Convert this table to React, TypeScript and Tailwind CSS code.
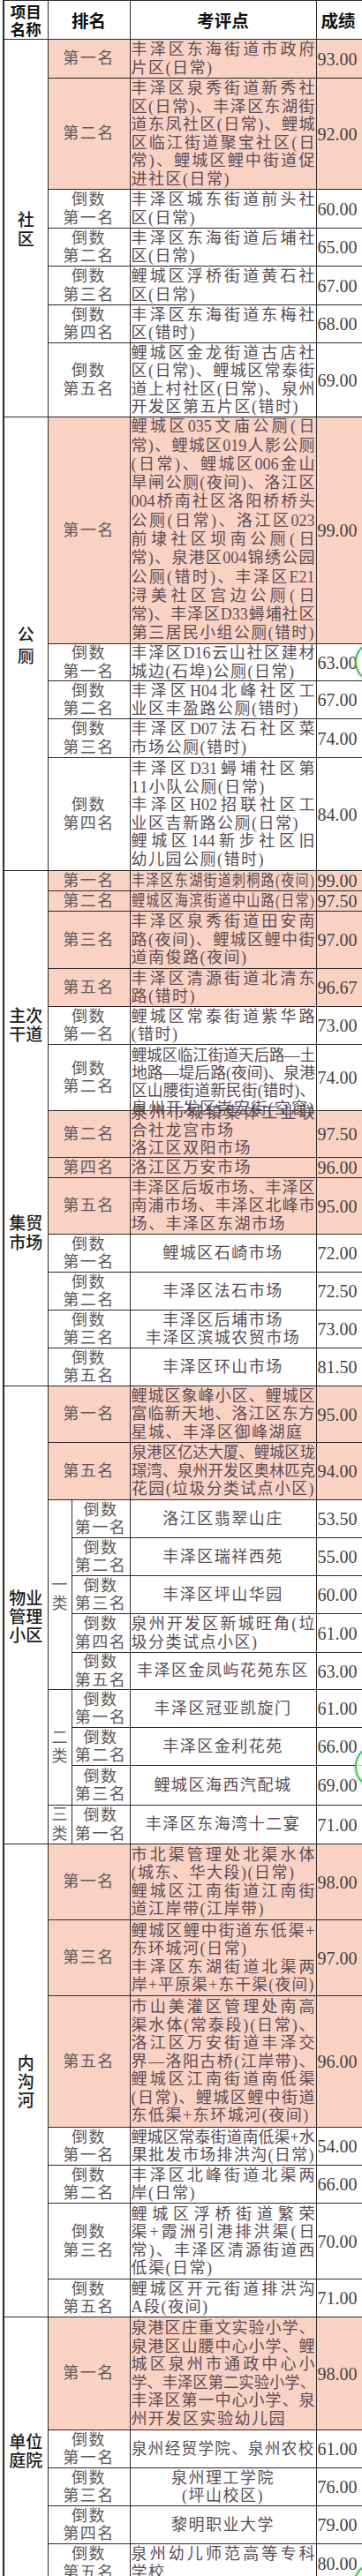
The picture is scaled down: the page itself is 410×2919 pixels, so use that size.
import { useLayoutEffect, useRef, useState } from "react";
import clsx from "clsx";

type Row = {
  rank: string[];
  lines: string[];
  score: string;
  h: string;
  pink?: boolean;
  center?: boolean;
  lh?: string;
  box?: string;
  cls?: { label: string[]; span: number };
  sub?: boolean;
};

type Section = { label?: string[]; lh?: string; custom?: boolean; rows: Row[] };

const serif = "font-['Liberation_Serif','Noto_Sans_CJK_SC',serif]";
const hei = "font-['Noto_Sans_CJK_SC',sans-serif]";
const cell = "border border-[#2a2a2a] p-0";
const pinkBg = "bg-[#fad2c3]";

const shequ: Row[] = [
  { rank: ["第一名"], lines: ["丰泽区东海街道市政府", "片区(日常)"], score: "93.00", h: "h-[44px]", pink: true },
  {
    rank: ["第二名"],
    lines: ["丰泽区泉秀街道新秀社", "区(日常)、丰泽区东湖街", "道东凤社区(日常)、鲤城", "区临江街道聚宝社区(日", "常)、鲤城区鲤中街道促", "进社区(日常)"],
    score: "92.00",
    h: "h-[126px]",
    pink: true,
  },
  { rank: ["倒数", "第一名"], lines: ["丰泽区城东街道前头社", "区(日常)"], score: "60.00", h: "h-[44px]" },
  { rank: ["倒数", "第二名"], lines: ["丰泽区东海街道后埔社", "区(日常)"], score: "65.00", h: "h-[43px]" },
  { rank: ["倒数", "第三名"], lines: ["鲤城区浮桥街道黄石社", "区(日常)"], score: "67.00", h: "h-[44px]" },
  { rank: ["倒数", "第四名"], lines: ["丰泽区东海街道东梅社", "区(错时)"], score: "68.00", h: "h-[43px]" },
  {
    rank: ["倒数", "第五名"],
    lines: ["鲤城区金龙街道古店社", "区(日常)、鲤城区常泰街", "道上村社区(日常)、泉州", "开发区第五片区(错时)"],
    score: "69.00",
    h: "h-[84px]",
  },
];

const gongce: Row[] = [
  {
    rank: ["第一名"],
    lines: [
      "鲤城区035文庙公厕(日",
      "常)、鲤城区019人影公厕",
      "(日常)、鲤城区006金山",
      "旱闸公厕(夜间)、洛江区",
      "004桥南社区洛阳桥桥头",
      "公厕(日常)、洛江区023",
      "前埭社区坝南公厕(日",
      "常)、泉港区004锦绣公园",
      "公厕(错时)、丰泽区E21",
      "浔美社区宫边公厕(日",
      "常)、丰泽区D33蟳埔社区",
      "第三居民小组公厕(错时)",
    ],
    score: "99.00",
    h: "h-[257px]",
    pink: true,
    lh: "leading-[21.3px]",
  },
  { rank: ["倒数", "第一名"], lines: ["丰泽区D16云山社区建材", "城边(石埠)公厕(日常)"], score: "63.00", h: "h-[42px]" },
  { rank: ["倒数", "第二名"], lines: ["丰泽区H04北峰社区工", "业区丰盈路公厕(错时)"], score: "67.00", h: "h-[43px]" },
  { rank: ["倒数", "第三名"], lines: ["丰泽区D07法石社区菜", "市场公厕(错时)"], score: "74.00", h: "h-[44px]" },
  {
    rank: ["倒数", "第四名"],
    lines: ["丰泽区D31蟳埔社区第", "<11小队公厕(日常)", "丰泽区H02招联社区工", "<业区吉新路公厕(日常)", "鲤城区144新步社区旧", "幼儿园公厕(错时)"],
    score: "84.00",
    h: "h-[128px]",
  },
];

const zhuci: Row[] = [
  { rank: ["第一名"], lines: ["丰泽区东湖街道刺桐路(夜间)"], score: "99.00", h: "h-[22px]", pink: true, lh: "leading-[20px]" },
  { rank: ["第二名"], lines: ["鲤城区海滨街道中山路(日常)"], score: "97.50", h: "h-[21px]", pink: true, lh: "leading-[20px]" },
  {
    rank: ["第三名"],
    lines: ["丰泽区泉秀街道田安南", "路(夜间)、鲤城区鲤中街", "道南俊路(夜间)"],
    score: "97.00",
    h: "h-[65px]",
    pink: true,
  },
  { rank: ["第五名"], lines: ["丰泽区清源街道北清东", "路(错时)"], score: "96.67", h: "h-[43px]", pink: true },
  { rank: ["倒数", "第一名"], lines: ["鲤城区常泰街道紫华路", "(错时)"], score: "73.00", h: "h-[43px]" },
  {
    rank: ["倒数", "第二名"],
    lines: ["鲤城区临江街道天后路—土", "地路—堤后路(夜间)、泉港", "区山腰街道新民街(错时)、", "泉州开发区崇宏街(空窗)"],
    score: "74.00",
    h: "h-[75px]",
    box: "h-[74px] pt-[2px]",
    lh: "leading-[20px]",
  },
];

const jimao: Row[] = [
  {
    rank: ["第二名"],
    lines: ["泉州市城镇集体工业联", "<合社龙宫市场", "洛江区双阳市场"],
    score: "97.50",
    h: "h-[53px]",
    pink: true,
    box: "flex h-[52px] flex-col justify-end",
    lh: "leading-[20px]",
  },
  { rank: ["第四名"], lines: ["洛江区万安市场"], score: "96.00", h: "h-[22px]", pink: true, lh: "leading-[20px]" },
  {
    rank: ["第五名"],
    lines: ["丰泽区后坂市场、丰泽区", "南浦市场、丰泽区北峰市", "场、丰泽区东湖市场"],
    score: "95.00",
    h: "h-[64px]",
    pink: true,
  },
  { rank: ["倒数", "第一名"], lines: ["鲤城区石崎市场"], center: true, score: "72.00", h: "h-[43px]" },
  { rank: ["倒数", "第二名"], lines: ["丰泽区法石市场"], center: true, score: "72.50", h: "h-[43px]" },
  { rank: ["倒数", "第三名"], lines: ["丰泽区后埔市场", "丰泽区滨城农贸市场"], center: true, score: "73.00", h: "h-[43px]" },
  { rank: ["倒数", "第五名"], lines: ["丰泽区环山市场"], center: true, score: "81.50", h: "h-[43px]" },
];

const wuye: Row[] = [
  {
    rank: ["第一名"],
    lines: ["鲤城区象峰小区、鲤城区", "富临新天地、洛江区东方", "星城、丰泽区御峰湖庭"],
    score: "95.00",
    h: "h-[64px]",
    pink: true,
  },
  {
    rank: ["第五名"],
    lines: ["泉港区亿达大厦、鲤城区珑", "璟湾、泉州开发区奥林匹克", "花园(垃圾分类试点小区)"],
    score: "94.00",
    h: "h-[65px]",
    pink: true,
  },
  { cls: { label: ["一", "类"], span: 5 }, sub: true, rank: ["倒数", "第一名"], lines: ["洛江区翡翠山庄"], center: true, score: "53.50", h: "h-[43px]" },
  { sub: true, rank: ["倒数", "第二名"], lines: ["丰泽区瑞祥西苑"], center: true, score: "55.00", h: "h-[43px]" },
  { sub: true, rank: ["倒数", "第三名"], lines: ["丰泽区坪山华园"], center: true, score: "60.00", h: "h-[43px]" },
  { sub: true, rank: ["倒数", "第四名"], lines: ["泉州开发区新城旺角(垃", "圾分类试点小区)"], score: "61.00", h: "h-[44px]" },
  { sub: true, rank: ["倒数", "第五名"], lines: ["丰泽区金凤屿花苑东区"], center: true, score: "63.00", h: "h-[42px]" },
  { cls: { label: ["二", "类"], span: 3 }, sub: true, rank: ["倒数", "第一名"], lines: ["丰泽区冠亚凯旋门"], center: true, score: "61.00", h: "h-[43px]" },
  { sub: true, rank: ["倒数", "第二名"], lines: ["丰泽区金利花苑"], center: true, score: "66.00", h: "h-[43px]" },
  { sub: true, rank: ["倒数", "第三名"], lines: ["鲤城区海西汽配城"], center: true, score: "69.00", h: "h-[45px]" },
  { cls: { label: ["三", "类"], span: 1 }, sub: true, rank: ["倒数", "第一名"], lines: ["丰泽区东海湾十二宴"], center: true, score: "71.00", h: "h-[42px]" },
];

const neigou: Row[] = [
  {
    rank: ["第一名"],
    lines: ["市北渠管理处北渠水体", "<(城东、华大段)(日常)", "鲤城区江南街道江南街", "道江岸带(江岸带)"],
    score: "98.00",
    h: "h-[86px]",
    pink: true,
  },
  {
    rank: ["第三名"],
    lines: ["鲤城区鲤中街道东低渠+", "<东环城河(日常)", "丰泽区东湖街道北渠两", "岸+平原渠+东干渠(夜间)"],
    score: "97.00",
    h: "h-[86px]",
    pink: true,
  },
  {
    rank: ["第五名"],
    lines: [
      "市山美灌区管理处南高",
      "渠水体(常泰段)(日常)、",
      "洛江区万安街道丰泽交",
      "界—洛阳古桥(江岸带)、",
      "鲤城区江南街道南低渠",
      "(日常)、鲤城区鲤中街道",
      "东低渠+东环城河(夜间)",
    ],
    score: "96.00",
    h: "h-[149px]",
    pink: true,
  },
  { rank: ["倒数", "第一名"], lines: ["鲤城区常泰街道南低渠+水", "果批发市场排洪沟(日常)"], score: "54.00", h: "h-[43px]" },
  { rank: ["倒数", "第二名"], lines: ["丰泽区北峰街道北渠两", "岸(日常)"], score: "66.00", h: "h-[43px]" },
  {
    rank: ["倒数", "第三名"],
    lines: ["鲤城区浮桥街道繁荣", "渠+霞洲引港排洪渠(日", "常)、丰泽区清源街道西", "低渠(日常)"],
    score: "70.00",
    h: "h-[86px]",
  },
  { rank: ["倒数", "第五名"], lines: ["鲤城区开元街道排洪沟", "A段(夜间)"], score: "71.00", h: "h-[43px]" },
];

const danwei: Row[] = [
  {
    rank: ["第一名"],
    lines: ["泉港区庄重文实验小学、", "泉港区山腰中心小学、鲤", "城区泉州市通政中心小", "学、丰泽区第二实验小学、", "丰泽区第一中心小学、泉", "州开发区实验幼儿园"],
    score: "98.00",
    h: "h-[128px]",
    pink: true,
  },
  { rank: ["倒数", "第一名"], lines: ["泉州经贸学院、泉州农校"], score: "61.00", h: "h-[43px]" },
  { rank: ["倒数", "第三名"], lines: ["泉州理工学院", "(坪山校区)"], center: true, score: "76.00", h: "h-[43px]" },
  { rank: ["倒数", "第四名"], lines: ["黎明职业大学"], center: true, score: "79.00", h: "h-[43px]" },
  { rank: ["倒数", "第五名"], lines: ["泉州幼儿师范高等专科", "学校"], score: "80.00", h: "h-[44px]" },
];

const sections: Section[] = [
  { label: ["社", "区"], lh: "leading-[22px]", rows: shequ },
  { label: ["公", "厕"], lh: "leading-[25px]", rows: gongce },
  { custom: true, rows: [...zhuci, ...jimao] },
  { label: ["物业", "管理", "小区"], rows: wuye },
  { label: ["内", "沟", "河"], rows: neigou },
  { label: ["单位", "庭院"], rows: danwei },
];

function tokens(text: string) {
  return text.match(/[A-Za-z0-9]+|./gu) ?? [];
}

// one printed line; justified lines spread, lines that are too long get squeezed
function Line({ text, mode }: { text: string; mode: "j" | "l" | "c" }) {
  const box = useRef<HTMLDivElement>(null);
  const inner = useRef<HTMLSpanElement>(null);
  const [scale, setScale] = useState<number | null>(null);

  useLayoutEffect(() => {
    if (!box.current || !inner.current) return;
    const avail = box.current.clientWidth;
    const natural = inner.current.offsetWidth;
    setScale(natural > avail ? avail / natural : 1);
  }, []);

  if (mode === "j" && scale === 1) {
    return (
      <div className="flex justify-between whitespace-nowrap">
        {tokens(text).map((t, i) => (
          <span key={i}>{t}</span>
        ))}
      </div>
    );
  }

  return (
    <div ref={box} className={clsx("whitespace-nowrap", mode === "c" ? "text-center" : "text-left")}>
      <span
        ref={inner}
        className={clsx("inline-block origin-left", mode !== "j" && "tracking-[1.5px]")}
        style={scale !== null && scale < 1 ? { transform: `scaleX(${scale})` } : undefined}
      >
        {text}
      </span>
    </div>
  );
}

function lineMode(row: Row, idx: number): "j" | "l" | "c" {
  if (row.center) return "c";
  if (row.lines[idx].startsWith("<")) return "l";
  return idx === row.lines.length - 1 ? "l" : "j";
}

function CategoryLabel({ lines, lh }: { lines: string[]; lh?: string }) {
  return (
    <div className={clsx(hei, "text-[19px] font-medium text-[#1c1c1c]", lh ?? "leading-[21px]")}>
      {lines.map((l) => (
        <div key={l}>{l}</div>
      ))}
    </div>
  );
}

export default function App() {
  return (
    <div className="relative w-[410px] overflow-hidden bg-white">
      <table className={clsx(serif, "ml-[3px] w-[410px] table-fixed border-collapse")}>
        <colgroup>
          <col className="w-[50px]" />
          <col className="w-[27px]" />
          <col className="w-[66px]" />
          <col className="w-[211px]" />
          <col className="w-[56px]" />
        </colgroup>
        <tbody>
          <tr className="h-[44px]">
            <td className={clsx(cell, "border-l-2 text-center")}>
              <div className={clsx(hei, "text-[17.5px] font-bold leading-[20px] text-[#111]")}>
                <div>项目</div>
                <div>名称</div>
              </div>
            </td>
            <td colSpan={2} className={clsx(cell, hei, "text-center text-[19.5px] font-bold text-[#111]")}>
              排名
            </td>
            <td className={clsx(cell, hei, "text-center text-[19.5px] font-bold text-[#111]")}>考评点</td>
            <td className={clsx(cell, hei, "pl-[5px] text-left text-[19.5px] font-bold text-[#111]")}>成绩</td>
          </tr>

          {sections.map((sec, si) =>
            sec.rows.map((r, ri) => (
              <tr key={`${si}-${ri}`} className={r.h}>
                {ri === 0 && (
                  <td
                    rowSpan={sec.rows.length}
                    className={clsx(cell, "border-l-2 text-center", sec.custom ? "align-top" : "align-middle")}
                  >
                    {sec.custom ? (
                      <>
                        <div className="pt-[152px]">
                          <CategoryLabel lines={["主次", "干道"]} />
                        </div>
                        <div className="mt-[193px]">
                          <CategoryLabel lines={["集贸", "市场"]} lh="leading-[22px]" />
                        </div>
                      </>
                    ) : (
                      <CategoryLabel lines={sec.label ?? []} lh={sec.lh} />
                    )}
                  </td>
                )}
                {r.cls && (
                  <td rowSpan={r.cls.span} className={clsx(cell, "text-center text-[18px] leading-[21.5px] text-[#666]")}>
                    {r.cls.label.map((c) => (
                      <div key={c}>{c}</div>
                    ))}
                  </td>
                )}
                <td
                  colSpan={r.sub ? 1 : 2}
                  className={clsx(
                    cell,
                    "text-center text-[18px] tracking-[1.5px] text-[#5f585c]",
                    r.lh === "leading-[20px]" ? "leading-[20px]" : "leading-[20.5px]",
                    r.pink && pinkBg
                  )}
                >
                  {r.rank.map((x) => (
                    <div key={x}>{x}</div>
                  ))}
                </td>
                <td className={clsx(cell, "px-[1px]", r.pink && pinkBg)}>
                  <div className={clsx(r.box, r.lh ?? "leading-[20.5px]", "text-[18px] text-[#5b4d56]")}>
                    {r.lines.map((l, li) => (
                      <Line key={li} text={l.replace(/^</, "")} mode={lineMode(r, li)} />
                    ))}
                  </div>
                </td>
                <td
                  className={clsx(
                    cell,
                    "pl-[1px] text-left font-['Liberation_Serif',serif] text-[20px] leading-[22px] text-[#444]",
                    r.pink && pinkBg
                  )}
                >
                  {r.score}
                </td>
              </tr>
            ))
          )}
        </tbody>
      </table>

      <div className="absolute left-[402px] top-[727px] h-[46px] w-[46px] rounded-full border-2 border-[#3ec45a] bg-white/70 shadow-[0_0_4px_rgba(0,0,0,0.25)]" />
      <div className="absolute left-[402px] top-[1977px] h-[50px] w-[50px] rounded-full border-2 border-[#3ec45a] bg-white/70 shadow-[0_0_4px_rgba(0,0,0,0.25)]" />
      <div className="absolute left-[400px] top-[2904px] h-[50px] w-[50px] rounded-full border-2 border-[#3ec45a] bg-white/70 shadow-[0_0_4px_rgba(0,0,0,0.25)]" />
    </div>
  );
}
